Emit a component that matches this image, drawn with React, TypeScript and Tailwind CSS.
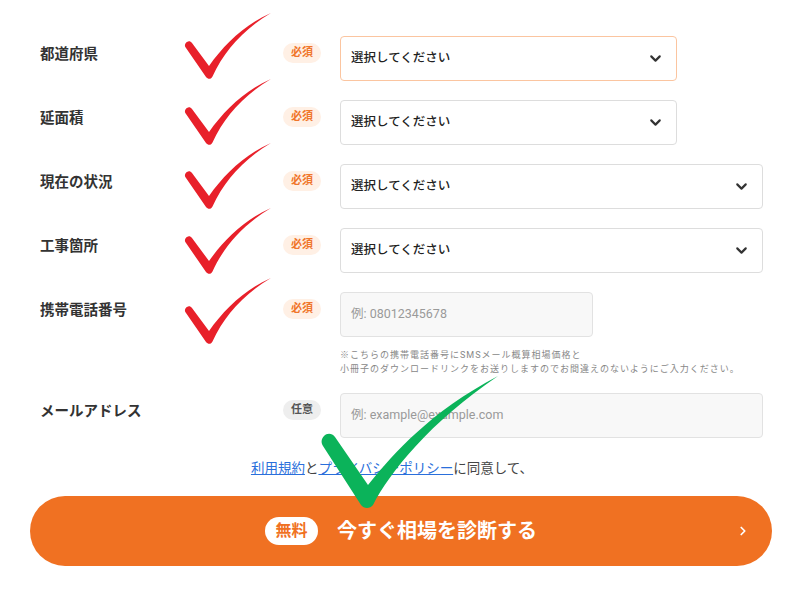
import { ChevronDown, ChevronRight } from "lucide-react";

const FONT = { fontFamily: '"Roboto", "Noto Sans CJK JP", sans-serif' };

type Row = {
  label: string;
  kind: "select" | "input";
  width: string;
  placeholder?: string;
  focused?: boolean;
};

const ROWS: Row[] = [
  { label: "都道府県", kind: "select", width: "w-[337px]", focused: true },
  { label: "延面積", kind: "select", width: "w-[337px]" },
  { label: "現在の状況", kind: "select", width: "w-[423px]" },
  { label: "工事箇所", kind: "select", width: "w-[423px]" },
  { label: "携帯電話番号", kind: "input", width: "w-[253px]", placeholder: "例: 08012345678" },
];

const RED_TOPS = [11, 77, 141, 206, 276];

function RedCheck({ top }: { top: number }) {
  return (
    <svg
      className="pointer-events-none absolute left-[184px]"
      style={{ top }}
      width="90"
      height="70"
      viewBox="0 0 90 70"
    >
      <path
        d="M3 31 C1 32 0 35 2 37 L22 66 C24 68.5 27 68.5 28.5 65.5 C40 40 60 18 87 2 C60 14 40 34 25 55 L8 32 C6.5 30 4.5 30 3 31 Z"
        fill="#e8202a"
      />
    </svg>
  );
}

function GreenCheck() {
  return (
    <svg
      className="pointer-events-none absolute left-[320px] top-[372px] z-10"
      width="185"
      height="140"
      viewBox="0 0 185 140"
    >
      <path
        d="M4 64 C1 67 1 71 3 74 L41 133 C44 137 50 137 53 133 C70 100 110 50 178 4 C110 40 75 80 48 113 L15 65 C12 61 7 61 4 64 Z"
        fill="#0bb35a"
      />
    </svg>
  );
}

function Badge({ required }: { required: boolean }) {
  return (
    <div className="w-[57px] shrink-0 pt-[7px]">
      <span
        className={
          required
            ? "flex h-[20px] w-[38px] items-center justify-center rounded-full bg-[#fff0e5] text-[11px] font-bold text-[#f0762b]"
            : "flex h-[20px] w-[38px] items-center justify-center rounded-full bg-[#eeeeee] text-[11px] font-bold text-[#555]"
        }
      >
        {required ? "必須" : "任意"}
      </span>
    </div>
  );
}

function Label({ children }: { children: React.ReactNode }) {
  return (
    <div className="w-[243px] shrink-0 pt-[9px] text-[14.5px] font-bold leading-[20px] text-[#333]">
      {children}
    </div>
  );
}

function Field({ row }: { row: Row }) {
  if (row.kind === "select") {
    return (
      <div
        className={`flex h-[45px] ${row.width} items-center justify-between rounded-[4px] border bg-white pl-[10px] pr-[12px] ${
          row.focused ? "border-[#fbc5a0]" : "border-[#dddddd]"
        }`}
      >
        <span className="text-[12.5px] font-medium text-[#222]">選択してください</span>
        <ChevronDown size={17} strokeWidth={3} className="text-[#333]" />
      </div>
    );
  }
  return (
    <div
      className={`flex h-[45px] ${row.width} items-center rounded-[4px] border border-[#e2e2e2] bg-[#f8f8f8] pl-[10px]`}
    >
      <span className="text-[12.5px] text-[#9a9a9a]">{row.placeholder}</span>
    </div>
  );
}

export default function App() {
  return (
    <div className="relative h-[600px] w-[800px] overflow-hidden bg-white" style={FONT}>
      <div className="flex flex-col pt-[36px]">
        <div className="flex flex-col gap-[19px] pl-[40px]">
          {ROWS.map((row) => (
            <div key={row.label} className="flex items-start">
              <Label>{row.label}</Label>
              <Badge required />
              <Field row={row} />
            </div>
          ))}
        </div>

        <div className="mt-[11px] pl-[340px] text-[9px] leading-[14px] tracking-[1px] text-[#888]">
          <p>※こちらの携帯電話番号にSMSメール概算相場価格と</p>
          <p>小冊子のダウンロードリンクをお送りしますのでお間違えのないようにご入力ください。</p>
        </div>

        <div className="mt-[17px] flex items-start pl-[40px]">
          <Label>メールアドレス</Label>
          <Badge required={false} />
          <div className="flex h-[45px] w-[423px] items-center rounded-[4px] border border-[#e2e2e2] bg-[#f8f8f8] pl-[10px]">
            <span className="text-[12.5px] text-[#9a9a9a]">例: example@example.com</span>
          </div>
        </div>

        <p className="mt-[20px] pr-[16px] text-center text-[13.5px] leading-[20px] text-[#444]">
          <a className="text-[#2a6fdb] underline">利用規約</a>
          と
          <a className="text-[#2a6fdb] underline">プライバシーポリシー</a>
          に同意して、
        </p>

        <div className="mt-[18px] pl-[30px] pr-[28px]">
          <button className="grid h-[70px] w-full grid-cols-[1fr_auto_1fr] items-center rounded-full bg-[#f07122] px-[22px]">
            <span />
            <span className="flex items-center gap-[19px]">
              <span className="flex h-[28px] w-[53px] items-center justify-center rounded-full bg-white text-[16px] font-bold text-[#f07122]">
                無料
              </span>
              <span className="text-[20px] font-bold text-white">今すぐ相場を診断する</span>
            </span>
            <span className="flex justify-end">
              <ChevronRight size={14} strokeWidth={3} className="text-white" />
            </span>
          </button>
        </div>
      </div>

      {RED_TOPS.map((t) => (
        <RedCheck key={t} top={t} />
      ))}
      <GreenCheck />
    </div>
  );
}
